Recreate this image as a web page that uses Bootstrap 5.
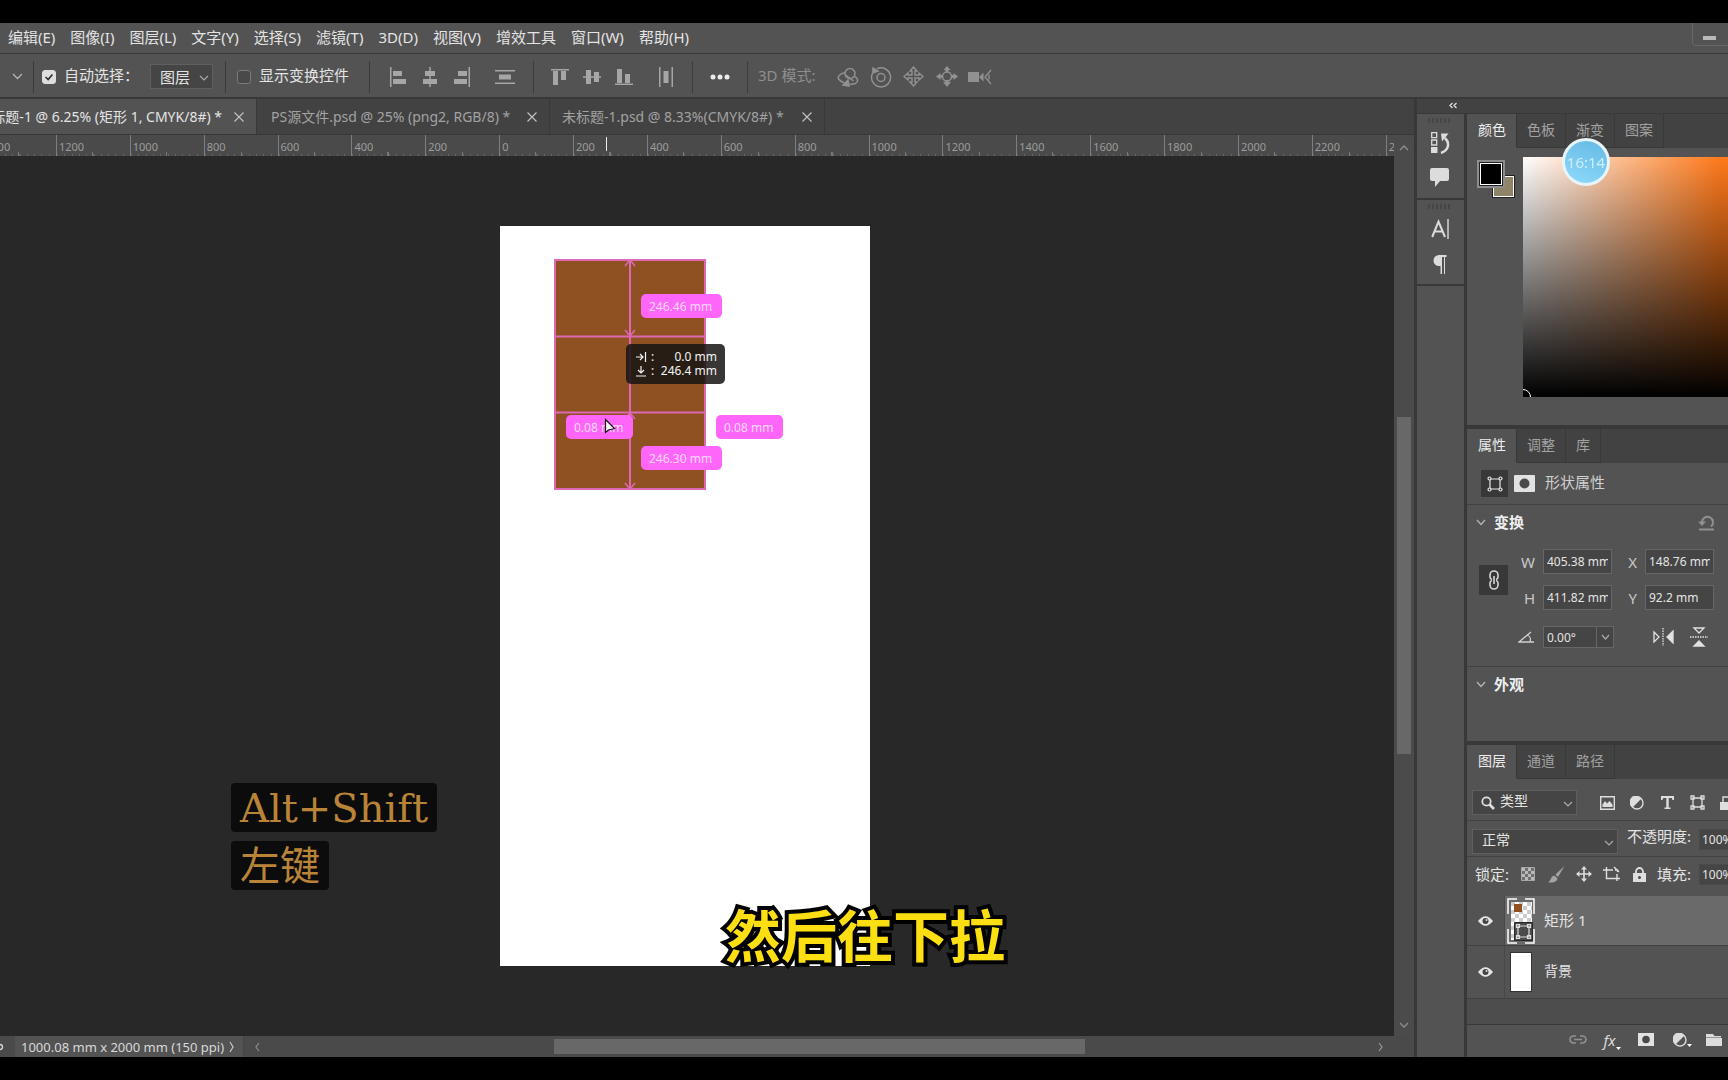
<!DOCTYPE html>
<html lang="zh-CN">
<head>
<meta charset="utf-8">
<meta name="viewport" content="width=device-width, initial-scale=1">
<title>未标题-1 @ 6.25% (矩形 1, CMYK/8#)</title>
<link href="https://cdn.jsdelivr.net/npm/bootstrap@5.3.0/dist/css/bootstrap.min.css" rel="stylesheet">
<style>
:root{--bar:#535353;--dark:#424242;--line:#383838;--field:#454545;--edge:#666;--txt:#e4e4e4;--dim:#a2a2a2}
*{box-sizing:border-box}
body{background:#000;color:var(--txt);font:15px/20px "Noto Sans","Noto Sans CJK SC",sans-serif;overflow:hidden}
button{background:none;border:0;padding:0;color:inherit;font:inherit}
svg{display:block;flex:none}
.app-shell{height:100vh;padding:23px 0}
/* menu and options bars */
.menu-strip{height:31px;background:var(--bar);border-bottom:1px solid var(--line);padding:0 0 2px 8px;gap:15px}
.menu-strip a{color:var(--txt);text-decoration:none;white-space:nowrap}
.win-btn{width:40px;height:23px;margin-right:-4px;border:1px solid #686868;border-top:0;border-radius:0 0 0 4px}
.win-btn::before{content:"";display:block;width:13px;height:4px;background:#b9b9b9;margin:8px auto 0 10px}
.opt-strip{height:45px;background:var(--bar);border-bottom:2px solid var(--line);padding:2px 0 0 12px}
.opt-strip label{line-height:20px;margin-bottom:4px}
.sep{width:1px;height:32px;background:#3c3c3c}
.opt-check{appearance:none;width:14px;height:14px;margin:0;border:1px solid #7b7b7b;border-radius:3px;background:#494949}
.opt-check:checked{background:#dedede url("data:image/svg+xml,%3Csvg xmlns='http://www.w3.org/2000/svg' viewBox='0 0 14 14'%3E%3Cpath d='M3 7l3 3 5-6' fill='none' stroke='%23333' stroke-width='2'/%3E%3C/svg%3E");border-color:#dedede}
.ui-select{appearance:none;height:25px;border:1px solid #5f5f5f;background:var(--field) url("data:image/svg+xml,%3Csvg xmlns='http://www.w3.org/2000/svg' width='10' height='6'%3E%3Cpath d='M1 1l4 4 4-4' fill='none' stroke='%23aaa' stroke-width='1.2'/%3E%3C/svg%3E") no-repeat right 3px top 10px;color:var(--txt);font:inherit;line-height:20px;padding:0 18px 0 9px}
.slot{width:32px;color:#a6a6a6;display:flex;justify-content:center}
.slot-3d{width:33px;color:#919191;display:flex;justify-content:center}
.dim{color:#8e8e8e}
/* documents */
.doc-tabs{height:36px;background:var(--dark);border-bottom:1px solid var(--line);font-size:14px}
.doc-tab{height:35px;width:293px;color:var(--dim);white-space:nowrap;border-right:1px solid var(--line);justify-content:space-between;padding:0 12px 0 14px}
.doc-tab.current{background:var(--bar);color:var(--txt);width:257px;justify-content:flex-end;gap:12px;overflow:hidden;padding-left:0}
.doc-tab.last-tab{width:275px;padding-left:12px}
.ruler{height:21px;background:#4a4a4a;overflow:hidden;position:relative}
.ruler-scale{width:106%;margin-left:-18px;height:21px}
.ruler-scale span{flex:1 1 0;border-left:1px solid #7e7e7e;font-size:11px;line-height:24px;padding-left:2px;color:#9c9c9c;
 background:linear-gradient(90deg,transparent calc(50% - 1px),#777 calc(50% - 1px),#777 50%,transparent 50%) 0 100%/100% 4px no-repeat,repeating-linear-gradient(90deg,#666 0 1px,transparent 1px 10%) 0 100%/100% 2px no-repeat}
.ruler-mark{position:absolute;left:606px;top:2px;width:1px;height:14px;background:#eee}
.stage{background:#282828;position:relative;overflow:hidden}
.artboard{position:absolute;left:500px;top:70px;width:370px;height:740px;background:#fff}
.artboard svg{position:absolute;left:53px;top:32px}
.tag{position:absolute;width:81px;height:24px;padding:0 0 0 8px;border-radius:5px;background:#fe66fa;color:#ffdcff;font-size:12px;line-height:25px;white-space:nowrap}
.tag-short{width:67px}
.hud{position:absolute;left:626px;top:188px;width:99px;height:40px;padding:6px 8px 5px 10px;border-radius:5px;background:rgba(22,20,18,.85);color:#f4f4f4;font-size:12px;line-height:14px}
.keycap{position:absolute;left:231px;height:49px;padding:0 9px;border-radius:4px;background:#0c0c0c;color:#b98437;line-height:51px;white-space:nowrap;font-size:40px;font-family:"DejaVu Serif","Noto Sans CJK SC",serif}
.caption-line{position:absolute;left:725px;top:737px;font:700 56px/80px "Noto Sans CJK SC",sans-serif;color:#fbdf13;-webkit-text-stroke:8px #000;stroke-linejoin:round;paint-order:stroke fill;white-space:nowrap}
.vbar{width:20px;background:#4b4b4b;color:#8f8f8f;padding-top:10px}
.vthumb{width:14px;height:337px;background:#686868;margin-top:266px}
.status{height:21px;background:#4a4a4a;color:#d8d8d8;font-size:13px}
.status-info{background:var(--bar);width:229px;padding:0 9px 0 6px;border-right:1px solid #444;margin-left:11px}
.hthumb{height:15px;width:531px;background:#686868;margin-left:294px}
/* right dock */
.dock{border-left:3px solid var(--line);background:var(--bar)}
.dock-head{height:15px;background:var(--dark);border-bottom:1px solid var(--line)}
.icon-dock{width:50px;border-right:3px solid var(--line)}
.icon-group{height:86px;border-bottom:2px solid var(--line);padding-top:4px;padding-right:1px;color:#dcdcdc}
.grip{width:24px;height:5px;background:repeating-linear-gradient(90deg,#464646 0 2px,transparent 2px 4px)}
.panels{width:261px;overflow:hidden}
.ptabs{height:34px;background:var(--dark);font-size:14px;color:var(--dim)}
.ptabs button{padding:0 10px 2px 10px;border-right:1px solid var(--line);border-bottom:1px solid var(--line)}
.ptabs button.current{background:var(--bar);color:#eee;padding-left:11px;border-bottom-color:var(--bar)}
.split{height:38px;border-top:4px solid var(--line)}
.rule{border-top:1px solid #414141}
.swatch-pair{position:relative;width:56px}
.sw-front,.sw-back{position:absolute;border:1px solid #fff;outline:1px solid #222}
.sw-front{left:13px;top:6px;width:22px;height:22px;background:#000;box-shadow:0 0 0 3px #8d8d8d}
.sw-back{left:26px;top:19px;width:21px;height:21px;background:#8f8468}
.color-field{height:240px;background:linear-gradient(180deg,transparent,#000),linear-gradient(90deg,#fff,#ff7a1c 96%);position:relative;overflow:hidden}
.color-field::after{content:"";position:absolute;left:-8px;bottom:-8px;width:16px;height:16px;border:1px solid #fff;border-radius:50%}
.clock{position:fixed;left:1562px;top:138px;width:48px;height:48px;border-radius:50%;border:3px solid #e8f3fa;background:linear-gradient(200deg,#64b9e4,#8edafa);color:#cdeefc;text-align:center;line-height:42px}
.sq{width:27px;height:27px;background:#383838;display:flex;align-items:center;justify-content:center}
.num{width:69px;height:25px;background:var(--field);border:1px solid var(--edge);color:var(--txt);font-size:12px;padding:0 3px;border-radius:0}
.xf-grid{display:grid;grid-template-columns:29px 19px 69px 17px 69px;gap:11px 8px;align-items:center;padding:17px 0 0 12px}
.xf-grid label{color:#c8c8c8;text-align:right;line-height:20px}
.sec-head{font-weight:700;gap:8px;color:#eee;padding:7px 13px 0 9px}
.pct{width:69px;height:21px;background:var(--field);border:1px solid #4a4a4a;color:var(--txt);font-size:12px;padding:0 2px;flex:none}
.layer-row{height:49px}
.layer-row.picked .layer-body{background:#6a6a6a}
.layer-body>span{padding-bottom:2px}
.eye-col{width:38px;border-right:1px solid #484848;color:#e6e6e6}
.thumb-col{width:39px}
.thumb-white{width:22px;height:40px;background:#fff;border:1px solid #333}
.list-rest{background:#4d4d4d}
.pfoot{height:33px;border-top:1px solid var(--line);color:#dcdcdc;padding:0 0 3px 94px}
.foot-slot{width:34px;display:flex;justify-content:center;flex:none}
</style>
</head>
<body>
<div class="app-shell d-flex flex-column">

 <nav class="menu-strip d-flex align-items-center flex-shrink-0">
  <a href="#">编辑(E)</a><a href="#">图像(I)</a><a href="#">图层(L)</a><a href="#">文字(Y)</a><a href="#">选择(S)</a><a href="#">滤镜(T)</a><a href="#">3D(D)</a><a href="#">视图(V)</a><a href="#">增效工具</a><a href="#">窗口(W)</a><a href="#">帮助(H)</a>
  <button class="win-btn ms-auto align-self-start flex-shrink-0" aria-label="最小化"></button>
 </nav>

 <div class="opt-strip d-flex align-items-center flex-shrink-0">
  <svg width="11" height="7" fill="none" stroke="#b5b5b5" stroke-width="1.300"><path d="M1 1l4.500 4.500L10 1"/></svg>
  <div class="sep" style="margin:0 8px 0 10px"></div>
  <input class="opt-check me-2" type="checkbox" id="auto" checked><label for="auto" style="width:86px">自动选择：</label>
  <select class="ui-select" style="width:63px" aria-label="自动选择对象"><option>图层</option></select>
  <div class="sep" style="margin:0 11px 0 12px"></div>
  <input class="opt-check me-2" type="checkbox" id="ctl"><label for="ctl" style="width:110px">显示变换控件</label>
  <div class="sep" style="margin-right:12px"></div>
  <button class="slot" aria-label="左对齐"><svg width="16" height="20" fill="currentColor"><path d="M0 0h1.500v20H0zM3 4h9v5H3zM3 12h13v5H3z"/></svg></button>
  <button class="slot" aria-label="水平居中对齐"><svg width="16" height="20" fill="currentColor"><path d="M7.300 0h1.500v20H7.300zM3 4h10v5H3zM1 12h14v5H1z"/></svg></button>
  <button class="slot" aria-label="右对齐"><svg width="16" height="20" fill="currentColor"><path d="M14.500 0H16v20h-1.500zM4 4h9v5H4zM0 12h13v5H0z"/></svg></button>
  <button class="slot ms-2" style="width:38px" aria-label="垂直分布"><svg width="20" height="16" fill="currentColor"><path d="M0 1h20v1.500H0zM0 13.500h20V15H0zM4 5.500h12v5H4z"/></svg></button>
  <div class="sep" style="margin:0 10px 0 9px"></div>
  <button class="slot" aria-label="顶对齐"><svg width="18" height="20" fill="currentColor"><path d="M0 2h18v1.500H0zM2 4h5v14H2zM10 4h5v9h-5z"/></svg></button>
  <button class="slot" aria-label="垂直居中对齐"><svg width="18" height="20" fill="currentColor"><path d="M0 9.300h18v1.500H0zM3 3h5v14H3zM11 5h5v10h-5z"/></svg></button>
  <button class="slot" aria-label="底对齐"><svg width="18" height="20" fill="currentColor"><path d="M0 16.500h18V18H0zM2 2h5v14H2zM10 7h5v9h-5z"/></svg></button>
  <button class="slot ms-2" style="width:36px" aria-label="水平分布"><svg width="14" height="20" fill="currentColor"><path d="M0 0h1.500v20H0zM12.500 0H14v20h-1.500zM4.500 4h5v12h-5z"/></svg></button>
  <div class="sep" style="margin:0 17px 0 8px"></div>
  <button aria-label="更多"><svg width="20" height="6" fill="#ececec"><circle cx="3" cy="3" r="2.500"/><circle cx="10" cy="3" r="2.500"/><circle cx="17" cy="3" r="2.500"/></svg></button>
  <div class="sep" style="margin:0 10px 0 17px"></div>
  <span class="dim mb-1" style="width:73px">3D 模式:</span>
  <button class="slot-3d" aria-label="环绕"><svg width="22" height="20" fill="none" stroke="currentColor" stroke-width="1.500"><circle cx="13" cy="6.500" r="5"/><path d="M8 5.500C2 7 0 10 2 12.500c1 1.500 3 2.500 5 3M17.500 9.500c4 2 4 5 1 7l-6 1M8.500 8l8 6"/><path d="M6 18l5-5 1 6z" fill="currentColor"/></svg></button>
  <button class="slot-3d" aria-label="滚动"><svg width="22" height="22" fill="none" stroke="currentColor" stroke-width="1.500"><circle cx="11" cy="11.500" r="4"/><path d="M7 2.800a9.500 9.500 0 1 1-4.500 4.500"/><path d="M3 7V2l5 3z" fill="currentColor"/></svg></button>
  <button class="slot-3d" aria-label="平移"><svg width="21" height="21" fill="none" stroke="currentColor" stroke-width="1.400"><path d="M10.500 1l3.500 4h-2v4h4V7l4 3.500-4 3.500v-2h-4v4h2l-3.500 4L7 16h2v-4H5v2l-4-3.500L5 7v2h4V5H7z"/></svg></button>
  <button class="slot-3d" aria-label="滑动"><svg width="22" height="21" fill="currentColor"><circle cx="11" cy="10.500" r="4.500" fill="none" stroke="currentColor" stroke-width="1.500"/><path d="M11 0l3.500 4h-2v2h-3V4h-2zM11 21l4-5h-2.500v-2h-3v2H7zM0 10.500L4.500 7v2H7v3H4.500v2zM22 10.500L17.500 7v2H15v3h2.500v2z"/></svg></button>
  <button class="slot-3d" aria-label="相机"><svg width="24" height="16" fill="currentColor"><path d="M0 3h11v10H0zM11 8l4.500-4.500v9z"/><path d="M23 1l-6 7 6 7M21 5.500v5" fill="none" stroke="currentColor" stroke-width="1.300"/></svg></button>
 </div>

 <div class="d-flex flex-grow-1" style="min-height:0">
  <main class="d-flex flex-column flex-grow-1" style="min-width:0">
   <div class="doc-tabs d-flex flex-shrink-0">
    <div class="doc-tab current d-flex align-items-center"><span>未标题-1 @ 6.25% (矩形 1, CMYK/8#) *</span><button aria-label="关闭"><svg width="10" height="10" stroke="#c4c4c4" stroke-width="1.100"><path d="M.5.5l9 9M9.500.5l-9 9"/></svg></button></div>
    <div class="doc-tab d-flex align-items-center"><span>PS源文件.psd @ 25% (png2, RGB/8) *</span><button aria-label="关闭"><svg width="10" height="10" stroke="#c4c4c4" stroke-width="1.100"><path d="M.5.5l9 9M9.500.5l-9 9"/></svg></button></div>
    <div class="doc-tab last-tab d-flex align-items-center"><span>未标题-1.psd @ 8.33%(CMYK/8#) *</span><button aria-label="关闭"><svg width="10" height="10" stroke="#c4c4c4" stroke-width="1.100"><path d="M.5.5l9 9M9.500.5l-9 9"/></svg></button></div>
   </div>
   <div class="d-flex flex-grow-1" style="min-height:0">
    <div class="d-flex flex-column flex-grow-1" style="min-width:0">
     <div class="ruler flex-shrink-0">
      <div class="ruler-scale d-flex"><span>1400</span><span>1200</span><span>1000</span><span>800</span><span>600</span><span>400</span><span>200</span><span>0</span><span>200</span><span>400</span><span>600</span><span>800</span><span>1000</span><span>1200</span><span>1400</span><span>1600</span><span>1800</span><span>2000</span><span>2200</span><span>2400</span></div>
      <div class="ruler-mark"></div>
     </div>
     <div class="stage flex-grow-1">
      <div class="artboard">
       <svg width="156" height="234" fill="none" stroke="#dd69b4" stroke-width="2"><rect x="2" y="2" width="150" height="229" fill="#8f5022"/><path d="M2 78.500h150M2 154.500h150M77 2v229"/><path d="M72 8l5-6 5 6M72 72l5 6 5-6M72 161l5-6 5 6M72 225l5 6 5-6" stroke-width="1.500"/></svg>
      </div>
      <div class="tag" style="left:641px;top:138px">246.46 mm</div>
      <div class="tag tag-short" style="left:566px;top:259px">0.08 mm</div>
      <div class="tag tag-short" style="left:716px;top:259px">0.08 mm</div>
      <div class="tag" style="left:641px;top:290px">246.30 mm</div>
      <div class="hud">
       <div class="d-flex align-items-center"><svg width="11" height="10" fill="none" stroke="#f4f4f4" stroke-width="1.200"><path d="M0 5h7M4 2l3 3-3 3M9.500 0v10"/></svg><span class="ms-1">:</span><span class="ms-auto">0.0 mm</span></div>
       <div class="d-flex align-items-center"><svg width="11" height="11" fill="none" stroke="#f4f4f4" stroke-width="1.200"><path d="M5 0v7M2 4l3 3 3-3M0 10h10"/></svg><span class="ms-1">:</span><span class="ms-auto">246.4 mm</span></div>
      </div>
      <svg style="position:absolute;left:604px;top:262px" width="12" height="18"><path d="M1.500 1.500v13l3-2.500 6-1.500z" fill="#fff" stroke="#111" stroke-width="1.200"/></svg>
      <div class="keycap" style="top:627px">Alt+Shift</div>
      <div class="keycap" style="top:685px">左键</div>
      <div class="caption-line">然后往下拉</div>
     </div>
    </div>
    <div class="vbar d-flex flex-column align-items-center flex-shrink-0">
     <svg width="10" height="6" fill="none" stroke="currentColor" stroke-width="1.300"><path d="M1 5l4-4 4 4"/></svg>
     <div class="vthumb"></div>
     <svg class="mt-auto mb-2" width="10" height="6" fill="none" stroke="currentColor" stroke-width="1.300"><path d="M1 1l4 4 4-4"/></svg>
    </div>
   </div>
   <div class="status d-flex align-items-center flex-shrink-0">
    <svg width="4" height="10" fill="none" stroke="#d8d8d8" stroke-width="1.300"><circle cx="0" cy="5" r="2.500"/></svg>
    <div class="status-info d-flex align-items-center justify-content-between align-self-stretch"><span>1000.08 mm x 2000 mm (150 ppi)</span><svg width="5" height="12" fill="none" stroke="#c8c8c8" stroke-width="1.200"><path d="M1 1l3 5-3 5"/></svg></div>
    <svg style="margin-left:11px" width="5" height="8" fill="none" stroke="#8c8c8c" stroke-width="1.200"><path d="M4 0L1 4l3 4"/></svg>
    <div class="hthumb"></div>
    <svg class="ms-auto" style="margin-right:31px" width="5" height="10" fill="none" stroke="#9a9a9a" stroke-width="1.200"><path d="M1 1l3 4-3 4"/></svg>
   </div>
  </main>

  <aside class="dock d-flex flex-column flex-shrink-0">
   <div class="dock-head flex-shrink-0"><svg style="margin:2px 0 0 32px" width="9" height="9" fill="none" stroke="#e0e0e0" stroke-width="1.300"><path d="M3.500 2L1 4.500 3.500 7M7.500 2L5 4.500 7.500 7"/></svg></div>
   <div class="d-flex flex-grow-1" style="min-height:0">
    <div class="icon-dock">
     <div class="icon-group d-flex flex-column align-items-center">
      <div class="grip"></div>
      <button style="margin-top:8px" aria-label="历史记录"><svg width="20" height="23" fill="none" stroke="currentColor" stroke-width="1.300"><path d="M1.700 1.700h5v5h-5zM1.700 9h5v5h-5z"/><path d="M1 16h6.500v6H1z" fill="currentColor" stroke="none"/><path d="M11 22c8-3 9-10 4-15" stroke-width="2.500"/><path d="M11 2.500h7.500l-6.500 8z" fill="currentColor" stroke="none"/></svg></button>
      <button style="margin-top:14px" aria-label="注释"><svg width="20" height="19" fill="currentColor"><path d="M2 0h15q2 0 2 2v9q0 2-2 2h-7l-5 6v-6H2q-2 0-2-2V2q0-2 2-2z"/></svg></button>
     </div>
     <div class="icon-group d-flex flex-column align-items-center">
      <div class="grip"></div>
      <button style="margin-top:9px" aria-label="字符"><svg width="18" height="22" fill="none" stroke="currentColor"><path d="M1.200 19L7.500 3.500 14 19M3.500 13.500h8" stroke-width="2"/><path d="M17 1v20" stroke-width="1.400"/></svg></button>
      <button style="margin-top:15px" aria-label="段落"><svg width="14" height="20" fill="currentColor"><path d="M13.500 0H6a5.500 5.500 0 0 0 0 11h1.500v8H9V2h2v17h1V2h1.500z"/></svg></button>
     </div>
    </div>
    <div class="panels d-flex flex-column">
     <div class="ptabs d-flex flex-shrink-0"><button class="current">颜色</button><button>色板</button><button>渐变</button><button>图案</button></div>
     <div class="d-flex flex-shrink-0" style="height:277px;padding-top:9px">
      <div class="swatch-pair flex-shrink-0"><div class="sw-back"></div><div class="sw-front"></div></div>
      <div class="color-field flex-grow-1"></div>
     </div>

     <div class="ptabs split d-flex flex-shrink-0"><button class="current">属性</button><button>调整</button><button>库</button></div>
     <div class="d-flex align-items-center flex-shrink-0" style="height:41px;padding-left:14px">
      <div class="sq"><svg width="16" height="16" fill="#383838" stroke="#e6e6e6" stroke-width="1.200"><path d="M3 3h10v10H3z"/><circle cx="2.500" cy="2.500" r="1.500"/><circle cx="13.500" cy="2.500" r="1.500"/><circle cx="2.500" cy="13.500" r="1.500"/><circle cx="13.500" cy="13.500" r="1.500"/></svg></div>
      <svg style="margin:0 10px 0 6px" width="21" height="17"><path d="M1 0h19q1 0 1 1v15q0 1-1 1H1q-1 0-1-1V1q0-1 1-1z" fill="#e2e2e2"/><circle cx="10.500" cy="8.500" r="5" fill="#4a4a4a"/></svg>
      <span class="mb-1" style="color:#cfcfcf">形状属性</span>
     </div>
     <div class="rule flex-shrink-0" style="height:162px">
      <div class="sec-head d-flex align-items-center"><svg width="10" height="7" fill="none" stroke="#b5b5b5" stroke-width="1.300"><path d="M1 1l4 4.500L9 1"/></svg><span>变换</span><button class="ms-auto" aria-label="复位"><svg width="17" height="17" fill="none" stroke="#909090" stroke-width="2"><path d="M4 8a5.500 5.500 0 1 1 9 4.500M1 15.500h15"/><path d="M0 7.500h8l-4 4.500z" fill="#909090" stroke="none"/></svg></button></div>
      <div class="xf-grid">
       <div class="sq" style="grid-row:1/3;height:30px;width:29px"><svg width="12" height="20" fill="none" stroke="#d6d6d6" stroke-width="1.600"><path d="M4 9.500Q2 9 2 7V5a4 4 0 0 1 8 0v2q0 2-2 2.500M4 10.500q-2 .5-2 2.500v2a4 4 0 0 0 8 0v-2q0-2-2-2.500M6 6v8"/></svg></div>
       <label for="fw">W</label><input class="num" id="fw" value="405.38 mm"><label for="fx">X</label><input class="num" id="fx" value="148.76 mm">
       <label for="fh">H</label><input class="num" id="fh" value="411.82 mm"><label for="fy">Y</label><input class="num" id="fy" value="92.2 mm">
      </div>
      <div class="d-flex align-items-center" style="padding:16px 0 0 51px">
       <svg width="17" height="12" fill="none" stroke="#d0d0d0" stroke-width="1.300"><path d="M13 1L1 11h15M9 4c3 1 4 4 3 7"/></svg>
       <input class="num" style="width:54px;height:22px;margin-left:8px" value="0.00°" aria-label="角度">
       <button class="num d-flex align-items-center justify-content-center" style="width:18px;height:22px;margin-left:-1px" aria-label="角度选项"><svg width="9" height="6" fill="none" stroke="#aaa" stroke-width="1.200"><path d="M1 1l3.500 4L8 1"/></svg></button>
       <button style="margin-left:39px" aria-label="水平翻转"><svg width="21" height="18" fill="none" stroke="#e2e2e2" stroke-width="1.300"><path d="M1 4l5 5-5 5z"/><path d="M20 3v12l-6-6z" fill="#e2e2e2"/><path d="M10 0v18" stroke-dasharray="1.500 1"/></svg></button>
       <button style="margin-left:16px" aria-label="垂直翻转"><svg width="18" height="20" fill="none" stroke="#e2e2e2" stroke-width="1.300"><path d="M4 1h10L9 6z"/><path d="M4 19h10l-5-5z" fill="#e2e2e2"/><path d="M0 10h18" stroke-dasharray="1.500 1"/></svg></button>
      </div>
     </div>
     <div class="rule flex-shrink-0" style="height:75px">
      <div class="sec-head d-flex align-items-center"><svg width="10" height="7" fill="none" stroke="#b5b5b5" stroke-width="1.300"><path d="M1 1l4 4.500L9 1"/></svg><span>外观</span></div>
     </div>

     <div class="ptabs split d-flex flex-shrink-0"><button class="current">图层</button><button>通道</button><button>路径</button></div>
     <div class="d-flex align-items-center flex-shrink-0" style="height:41px;padding:10px 0 4px 5px">
      <div class="d-flex align-items-center flex-shrink-0" style="width:105px;position:relative">
       <svg style="position:absolute;left:9px" width="14" height="14" fill="none" stroke="#dedede" stroke-width="1.800"><circle cx="5.500" cy="5.500" r="4.200"/><path d="M8.500 8.500l4.500 4.500" stroke-width="2.600"/></svg>
       <select class="ui-select w-100" style="padding:0 18px 3px 27px;font-size:14px" aria-label="筛选类型"><option>类型</option></select>
      </div>
      <div class="d-flex align-items-center" style="margin-left:15px;color:#dedede">
       <button class="slot text-reset" style="width:30px" aria-label="像素图层"><svg width="15" height="14" fill="none" stroke="currentColor" stroke-width="1.400"><path d="M.7.7h13.600v12.600H.7z"/><path d="M2.500 11V8.500L5 5l2 2.500L9.500 5l3 3.500V11z" fill="currentColor" stroke="none"/></svg></button>
       <button class="slot text-reset" style="width:30px" aria-label="调整图层"><svg width="14" height="14"><circle cx="7" cy="7" r="6" fill="none" stroke="currentColor" stroke-width="1.400"/><path d="M11.500 2.500A6.500 6.500 0 1 0 2.500 11.500z" fill="currentColor"/></svg></button>
       <button class="slot text-reset" style="width:30px" aria-label="文字图层"><svg width="13" height="13" fill="currentColor"><path d="M0 0h13v4h-1.500l-.7-2H7.700v9.500H9.500V13h-6v-1.500h1.800V2H2.200l-.7 2H0z"/></svg></button>
       <button class="slot text-reset" style="width:30px" aria-label="形状图层"><svg width="15" height="15" fill="#535353" stroke="currentColor" stroke-width="1.300"><path d="M3 3h9v9H3zM1 1h3v3H1zM11 1h3v3h-3zM1 11h3v3H1zM11 11h3v3h-3z"/></svg></button>
       <button class="slot text-reset" style="width:30px" aria-label="智能对象"><svg width="15" height="14" fill="currentColor"><path d="M0 6h12v8H0z"/><path d="M3 6V1h9v5" fill="none" stroke="currentColor" stroke-width="1.400"/></svg></button>
      </div>
     </div>
     <div class="rule d-flex flex-shrink-0" style="height:36px;padding:8px 0 0 5px">
      <select class="ui-select flex-shrink-0" style="width:146px;font-size:14px;padding-bottom:3px" aria-label="混合模式"><option>正常</option></select>
      <label for="op" class="flex-shrink-0" style="margin:-3px 0 0 9px;width:72px">不透明度:</label><input class="pct" id="op" value="100%">
     </div>
     <div class="rule d-flex align-items-center flex-shrink-0" style="height:40px;padding:0 0 5px 8px">
      <span class="flex-shrink-0 me-1" style="width:35px">锁定:</span>
      <button class="slot flex-shrink-0" style="width:28px" aria-label="锁定透明像素"><svg width="14" height="14"><path d="M.5.5h13v13H.5z" fill="#707070" stroke="#a8a8a8"/><path d="M1 1h3v3H1zM7 1h3v3H7zM4 4h3v3H4zM10 4h3v3h-3zM1 7h3v3H1zM7 7h3v3H7zM4 10h3v3H4zM10 10h3v3h-3z" fill="#bababa"/></svg></button>
      <button class="slot flex-shrink-0" style="width:28px" aria-label="锁定图像像素"><svg width="17" height="17" fill="#a3a3a3"><path d="M16.500 0L10 11 7.500 8.500zM6.500 9.500L9.500 12.500C9 16 5 17 0 16.500 3 15 2.500 10 6.500 9.500z"/></svg></button>
      <button class="slot flex-shrink-0" style="width:27px" aria-label="锁定位置"><svg width="16" height="16" fill="none" stroke="#dedede" stroke-width="1.600"><path d="M8 1v14M1 8h14"/><path d="M8 0l3 3.500H5zM8 16l3-3.500H5zM0 8l3.500-3v6zM16 8l-3.500-3v6z" fill="#dedede" stroke="none"/></svg></button>
      <button class="slot flex-shrink-0" style="width:28px" aria-label="防止自动嵌套"><svg width="17" height="16" fill="none" stroke="#dedede" stroke-width="1.400"><path d="M0 4h10M3.500 1v11.500H17M14 15V8M12 4h2.500v2M11 1l5 5" /></svg></button>
      <button class="slot flex-shrink-0" style="width:28px" aria-label="锁定全部"><svg width="13" height="15" fill="#dedede"><path d="M0 6h13v9H0z"/><path d="M3 7V4.500a3.500 3.500 0 0 1 7 0V7" fill="none" stroke="#dedede" stroke-width="1.800"/><circle cx="6.500" cy="10.500" r="1.500" fill="#484848"/></svg></button>
      <label for="fill" class="flex-shrink-0" style="width:42px;margin-left:4px">填充:</label><input class="pct" id="fill" value="100%">
     </div>
     <div class="layer-row picked d-flex flex-shrink-0">
      <div class="eye-col d-flex align-items-center justify-content-center"><svg width="15" height="10"><path d="M0 5Q7.500-4.500 15 5 7.500 14.500 0 5z" fill="currentColor"/><circle cx="7.500" cy="5" r="3" fill="#444"/><circle cx="8.500" cy="4" r="1" fill="#ddd"/></svg></div>
      <div class="layer-body d-flex align-items-center flex-grow-1">
       <div class="thumb-col d-flex">
        <svg style="margin-left:2px" width="28" height="46">
         <defs><pattern id="chk" width="8" height="8" patternUnits="userSpaceOnUse"><path d="M0 0h8v8H0z" fill="#fff"/><path d="M0 0h4v4H0zM4 4h4v4H4z" fill="#ccc"/></pattern></defs>
         <path d="M4 4h21v38H4z" fill="url(#chk)"/><path d="M7 6h8v8H7z" fill="#8f5022"/>
         <path d="M7.500 24.500h18v18h-18z" fill="#4a4a4a" stroke="#282828"/><path d="M11 28h11v11H11zM9.500 26.500h3v3h-3zM20.500 26.500h3v3h-3zM9.500 37.500h3v3h-3zM20.500 37.500h3v3h-3z" fill="#4a4a4a" stroke="#ddd" stroke-width="1.200"/>
         <path d="M10 1H1v15M18 1h9v15M1 31v14h9M18 45h9V31" fill="none" stroke="#fff" stroke-width="1.500"/>
        </svg>
       </div><span>矩形 1</span>
      </div>
     </div>
     <div class="layer-row rule d-flex flex-shrink-0" style="height:53px">
      <div class="eye-col d-flex align-items-center justify-content-center"><svg width="15" height="10"><path d="M0 5Q7.500-4.500 15 5 7.500 14.500 0 5z" fill="currentColor"/><circle cx="7.500" cy="5" r="3" fill="#444"/><circle cx="8.500" cy="4" r="1" fill="#ddd"/></svg></div>
      <div class="layer-body d-flex align-items-center flex-grow-1" style="font-size:14px"><div class="thumb-col" style="padding-left:5px"><div class="thumb-white"></div></div><span>背景</span></div>
     </div>
     <div class="list-rest rule flex-grow-1"></div>
     <div class="pfoot d-flex align-items-center flex-shrink-0">
      <button class="foot-slot" aria-label="链接图层"><svg width="18" height="9" fill="none" stroke="#8f8f8f" stroke-width="1.700"><path d="M7 1H4.500a3.500 3.500 0 0 0 0 7H7M11 1h2.500a3.500 3.500 0 0 1 0 7H11M5 4.500h8"/></svg></button>
      <button class="foot-slot fst-italic" aria-label="图层样式">fx<svg class="align-self-end" width="5" height="3" fill="#fff"><path d="M0 0h5L2.500 3z"/></svg></button>
      <button class="foot-slot" aria-label="图层蒙版"><svg width="16" height="13"><path d="M0 0h16v13H0z" fill="#e2e2e2"/><circle cx="8" cy="6.500" r="3.800" fill="#4a4a4a"/></svg></button>
      <button class="foot-slot" aria-label="调整图层"><svg class="ms-1" width="14" height="14"><circle cx="7" cy="7" r="6" fill="none" stroke="currentColor" stroke-width="1.400"/><path d="M11.500 2.500A6.500 6.500 0 1 0 2.500 11.500z" fill="currentColor"/></svg><svg class="align-self-end" width="5" height="3" fill="#fff"><path d="M0 0h5L2.500 3z"/></svg></button>
      <button class="foot-slot" aria-label="新建组"><svg width="16" height="12" fill="currentColor"><path d="M0 0h7l1.500 2H15v1.500H0zM0 4h16v8H0z"/></svg></button>
     </div>
    </div>
   </div>
  </aside>
 </div>
</div>
<div class="clock">16:14</div>
<script src="https://cdn.jsdelivr.net/npm/bootstrap@5.3.0/dist/js/bootstrap.bundle.min.js"></script>
</body>
</html>
